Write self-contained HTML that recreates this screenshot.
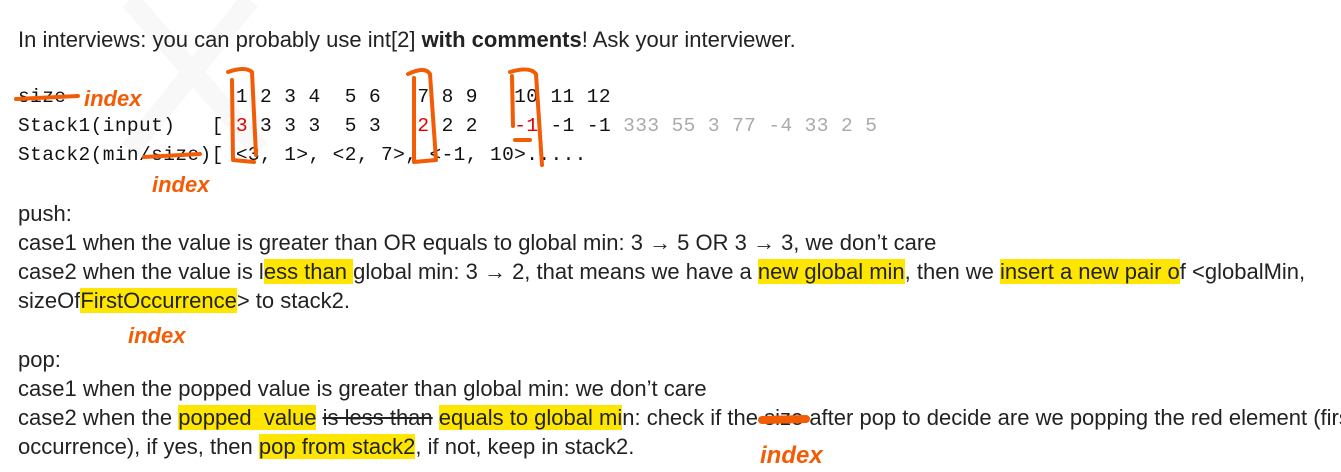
<!DOCTYPE html>
<html><head><meta charset="utf-8"><style>
body{margin:0;width:1341px;height:472px;background:#fff;position:relative;overflow:hidden;font-family:"Liberation Sans",Arial,sans-serif;color:#222;}
.t{position:absolute;left:18px;font-size:22px;white-space:nowrap;line-height:29px;letter-spacing:0px}
.m{position:absolute;left:18px;font-family:"Liberation Mono",monospace;font-size:19.5px;white-space:pre;line-height:29px;color:#111;letter-spacing:0.4px}
.r{color:#e00000}.g{color:#aaa}
.h{background:#ffe600;}
svg{position:absolute;left:0;top:0}
</style></head><body>
<svg width="1341" height="472"><path d="M130 0 L260 150 M250 0 L130 150" stroke="#f8f8f8" stroke-width="20" fill="none"/></svg>
<div class="t" style="top:25px">In interviews: you can probably use int[2] <b>with comments</b>! Ask your interviewer.</div>
<div class="m" style="top:83px">size              1 2 3 4  5 6   7 8 9   10 11 12</div>
<div class="m" style="top:112px">Stack1(input)   [ <span class="r">3</span> 3 3 3  5 3   <span class="r">2</span> 2 2   <span class="r">-1</span> -1 -1 <span class="g">333 55 3 77 -4 33 2 5</span></div>
<div class="m" style="top:141px">Stack2(min/size)[ &lt;3, 1&gt;, &lt;2, 7&gt;, &lt;-1, 10&gt;.....</div>
<div class="t" style="top:199px">push:</div>
<div class="t" style="top:228px">case1 when the value is greater than OR equals to global min: 3 → 5 OR 3 → 3, we don’t care</div>
<div class="t" style="top:257px">case2 when the value is l<span class="h">ess than </span>global min: 3 → 2, that means we have a <span class="h">new global min</span>, then we <span class="h">insert a new pair o</span>f &lt;globalMin,</div>
<div class="t" style="top:286px">sizeOf<span class="h">FirstOccurrence</span>&gt; to stack2.</div>
<div class="t" style="top:345px">pop:</div>
<div class="t" style="top:374px">case1 when the popped value is greater than global min: we don’t care</div>
<div class="t" style="top:403px">case2 when the <span class="h">popped&nbsp; value</span> <s>is less than</s> <span class="h">equals to global mi</span>n: check if the size after pop to decide are we popping the red element (first</div>
<div class="t" style="top:432px">occurrence), if yes, then <span class="h">pop from stack2</span>, if not, keep in stack2.</div>
<svg width="1341" height="472" fill="none" stroke="#f25c05" stroke-width="4" stroke-linecap="round" stroke-linejoin="round">
<path d="M16 99 L78 96"/>
<text x="84" y="106" fill="#f25c05" stroke="none" font-family="Liberation Sans,sans-serif" font-size="22" font-style="italic" font-weight="bold">index</text>
<path d="M144 157 L200 154"/>
<text x="152" y="192" fill="#f25c05" stroke="none" font-family="Liberation Sans,sans-serif" font-size="22" font-style="italic" font-weight="bold">index</text>
<text x="128" y="343" fill="#f25c05" stroke="none" font-family="Liberation Sans,sans-serif" font-size="22" font-style="italic" font-weight="bold">index</text>
<path d="M762 420 L806 419" stroke-width="8"/>
<text x="760" y="463" fill="#f25c05" stroke="none" font-family="Liberation Sans,sans-serif" font-size="24" font-style="italic" font-weight="bold">index</text>
<path d="M228 72 Q245 66 252 72 L256 155 M232 80 L233 160 L254 162"/>
<path d="M408 74 Q425 66 430 74 L436 160 L414 162 L414 78"/>
<path d="M510 72 Q530 66 536 74 L542 165 M512 76 L513 126 M515 140 L530 140"/>
</svg>
</body></html>
